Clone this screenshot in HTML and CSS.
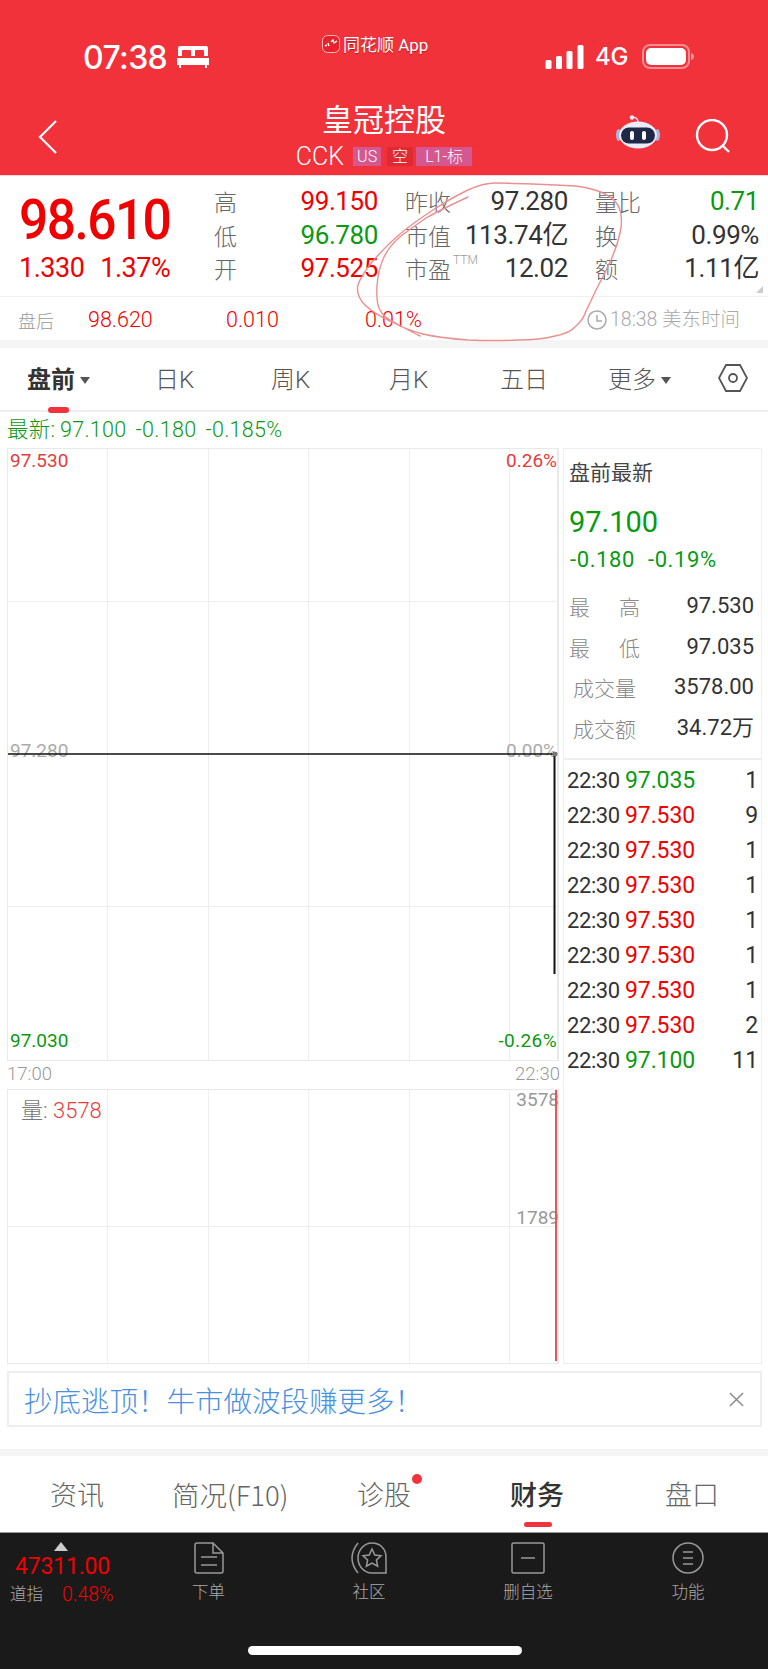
FILE: index.html
```html
<!DOCTYPE html>
<html lang="zh">
<head>
<meta charset="utf-8">
<title>皇冠控股</title>
<link rel="stylesheet" href="styles.css">
</head>
<body>
<div class="page">
  <header class="hdr">
    <div class="status">
      <div class="st-left"><span class="clock">07:38</span>
        <svg class="bed" viewBox="0 0 32 22"><path d="M3 0h26a2 2 0 0 1 2 2v8h-4V5a1 1 0 0 0-1-1h-7a1 1 0 0 0-1 1v5h-4V5a1 1 0 0 0-1-1H6a1 1 0 0 0-1 1v5H1V2a2 2 0 0 1 2-2zM0 12h32v7h-2v3h-2v-3H4v3H2v-3H0z" fill="#fff"/></svg>
      </div>
      <div class="st-mid">
        <svg class="applogo" viewBox="0 0 18 18"><rect x=".5" y=".5" width="17" height="17" rx="5" fill="#e8222c" stroke="#fbb" /><path d="M3 11l2-1M6 8l1 3M9 7l2-2 1 3 3-2" stroke="#fff" stroke-width="1.4" fill="none"/></svg>
        <span>同花顺 App</span>
      </div>
      <div class="st-right">
        <svg class="signal" viewBox="0 0 38 24"><rect x="0" y="15" width="6" height="9" rx="1.5"/><rect x="10.500" y="11" width="6" height="13" rx="1.500"/><rect x="21" y="6" width="6" height="18" rx="1.500"/><rect x="32" y="0" width="6" height="24" rx="1.500"/></svg>
        <span class="fourg">4G</span>
        <svg class="battery" viewBox="0 0 52 25"><rect x="1" y="1" width="46" height="23" rx="7" fill="none" stroke="#fff" stroke-opacity=".45" stroke-width="2"/><rect x="4" y="4" width="40" height="17" rx="5" fill="#fff"/><path d="M49 9c2 .5 3 2 3 3.500s-1 3-3 3.500z" fill="#fff" fill-opacity=".5"/></svg>
      </div>
    </div>
    <div class="nav">
      <svg class="back" viewBox="0 0 20 36"><path d="M18 2L2 18l16 16" fill="none" stroke="#fff" stroke-width="2.200"/></svg>
      <div class="nav-title">
        <div class="name">皇冠控股</div>
        <div class="sub"><span class="code">CCK</span><span class="tag tag-p">US</span><span class="tag tag-d">空</span><span class="tag tag-l">L1-标</span></div>
      </div>
      <div class="nav-icons">
        <svg class="robot" viewBox="0 0 44 34"><circle cx="16" cy="2.500" r="2.200" fill="#e8eef8"/><path d="M16 2.500c4-.5 6 1 6 5" stroke="#e8eef8" stroke-width="1.400" fill="none"/><ellipse cx="2.500" cy="20" rx="2.500" ry="6" fill="#aab4dc"/><ellipse cx="41.500" cy="20" rx="2.500" ry="6" fill="#aab4dc"/><ellipse cx="22" cy="20" rx="19" ry="13.500" fill="#e9ecf9"/><rect x="5" y="12.500" width="34" height="16" rx="8" fill="#1f2947"/><rect x="14" y="16" width="4" height="9" rx="2" fill="#fff"/><rect x="26" y="16" width="4" height="9" rx="2" fill="#fff"/></svg>
        <svg class="search" viewBox="0 0 36 34"><circle cx="17" cy="16" r="15" fill="none" stroke="#fff" stroke-width="2.400"/><path d="M27 26l7 7" stroke="#fff" stroke-width="2.400"/></svg>
      </div>
    </div>
  </header>

  <section class="quote">
    <div class="big">
      <div class="price">98.610</div>
      <div class="change"><span>1.330</span><span>1.37%</span></div>
    </div>
    <div class="stats">
      <span class="lb">高</span><span class="v up">99.150</span>
      <span class="lb lb2">昨收</span><span class="v">97.280</span>
      <span class="lb lb3">量比</span><span class="v dn">0.71</span>
      <span class="lb">低</span><span class="v dn">96.780</span>
      <span class="lb lb2">市值</span><span class="v">113.74亿</span>
      <span class="lb lb3">换</span><span class="v">0.99%</span>
      <span class="lb">开</span><span class="v up">97.525</span>
      <span class="lb lb2">市盈<sup class="ttm">TTM</sup></span><span class="v">12.02</span>
      <span class="lb lb3">额</span><span class="v">1.11亿</span>
    </div>
    <i class="corner"></i>
  </section>

  <section class="after">
    <span class="af-l">盘后</span>
    <span class="af-a">98.620</span>
    <span class="af-b">0.010</span>
    <span class="af-c">0.01%</span>
    <span class="af-t">
      <svg class="clockic" viewBox="0 0 20 20"><circle cx="10" cy="10" r="9" fill="none" stroke="#aaa" stroke-width="1.500"/><path d="M10 5v6h5" fill="none" stroke="#aaa" stroke-width="1.500"/></svg>18:38 美东时间</span>
  </section>

  <nav class="tabs">
    <span class="tab t1 on">盘前<i class="caret"></i><b class="ul"></b></span>
    <span class="tab t2">日K</span>
    <span class="tab t3">周K</span>
    <span class="tab t4">月K</span>
    <span class="tab t5">五日</span>
    <span class="tab t6">更多<i class="caret"></i></span>
    <svg class="hex" viewBox="0 0 30 28"><path d="M8 1h14l7 13-7 13H8L1 14z" fill="none" stroke="#555" stroke-width="1.800"/><circle cx="15" cy="14" r="4" fill="none" stroke="#555" stroke-width="1.800"/></svg>
  </nav>

  <div class="latest">最新: 97.100&nbsp;&nbsp;-0.180&nbsp;&nbsp;-0.185%</div>

  <section class="market">
    <div class="charts">
      <div class="pane pane-price">
        <i class="hl h1"></i><i class="hl h2"></i><i class="hl h3"></i>
        <div class="cols"><i></i><i></i><i></i><i></i><i></i><i></i></div>
        <span class="ax a-tl">97.530</span><span class="ax a-tr">0.26%</span>
        <span class="ax a-ml">97.280</span><span class="ax a-mr">0.00%</span>
        <span class="ax a-bl">97.030</span><span class="ax a-br">-0.26%</span>
        <svg class="pline" viewBox="0 0 552 240"><path d="M0 2H546" stroke="#111" stroke-width="1.300"/><path d="M546.500 2V222" stroke="#111" stroke-width="2"/><circle cx="547" cy="2" r="2.500" fill="#777"/></svg>
      </div>
      <div class="timeaxis"><span>17:00</span><span>22:30</span></div>
      <div class="pane pane-vol">
        <i class="hl hv"></i>
        <div class="cols"><i></i><i></i><i></i><i></i><i></i><i></i></div>
        <span class="vol-l">量: <em>3578</em></span>
        <span class="vol-a">3578</span><span class="vol-b">1789</span>
        <i class="vbar"></i>
      </div>
    </div>
    <aside class="side">
      <div class="sum">
        <div class="s-title">盘前最新</div>
        <div class="s-price">97.100</div>
        <div class="s-chg"><span>-0.180</span><span>-0.19%</span></div>
        <div class="s-row"><span class="sp">最<b></b>高</span><span>97.530</span></div>
        <div class="s-row"><span class="sp">最<b></b>低</span><span>97.035</span></div>
        <div class="s-row"><span class="ind">成交量</span><span>3578.00</span></div>
        <div class="s-row"><span class="ind">成交额</span><span>34.72万</span></div>
      </div>
      <div class="ticks">
        <div class="tk"><span class="tm">22:30</span><span class="dn">97.035</span><span class="n">1</span></div>
        <div class="tk"><span class="tm">22:30</span><span class="up">97.530</span><span class="n">9</span></div>
        <div class="tk"><span class="tm">22:30</span><span class="up">97.530</span><span class="n">1</span></div>
        <div class="tk"><span class="tm">22:30</span><span class="up">97.530</span><span class="n">1</span></div>
        <div class="tk"><span class="tm">22:30</span><span class="up">97.530</span><span class="n">1</span></div>
        <div class="tk"><span class="tm">22:30</span><span class="up">97.530</span><span class="n">1</span></div>
        <div class="tk"><span class="tm">22:30</span><span class="up">97.530</span><span class="n">1</span></div>
        <div class="tk"><span class="tm">22:30</span><span class="up">97.530</span><span class="n">2</span></div>
        <div class="tk"><span class="tm">22:30</span><span class="dn">97.100</span><span class="n">11</span></div>
      </div>
    </aside>
  </section>

  <div class="banner"><span>抄底逃顶！牛市做波段赚更多！</span>
    <svg class="close" viewBox="0 0 16 16"><path d="M1 1l14 14M15 1L1 15" stroke="#888" stroke-width="1.500"/></svg>
  </div>
  <div class="band"></div>

  <nav class="subtabs">
    <span class="st s1">资讯</span>
    <span class="st s2">简况(F10)</span>
    <span class="st s3">诊股<i class="dot"></i></span>
    <span class="st s4 on">财务<b class="ul2"></b></span>
    <span class="st s5">盘口</span>
  </nav>

  <footer class="foot">
    <div class="foot-row">
      <div class="idx">
        <i class="tri"></i>
        <div class="idx-v">47311.00</div>
        <div class="idx-l"><span>道指</span><em>0.48%</em></div>
      </div>
      <div class="fi fi1">
        <svg viewBox="0 0 30 32" class="fic w30"><path d="M3 1h16l10 10v18a2 2 0 0 1-2 2H3a2 2 0 0 1-2-2V3a2 2 0 0 1 2-2zM19 1v10h10M7 15h16M7 23h16" fill="none" stroke="#999" stroke-width="1.500"/></svg>
        <span>下单</span>
      </div>
      <div class="fi fi2">
        <svg viewBox="0 0 36 32" class="fic w36"><path d="M7 1C3 6 1 11 1 16s2 10 6 15" fill="none" stroke="#999" stroke-width="1.500"/><path d="M21 1c8 0 14 6 14 14v16H21c-8 0-14-7-14-15S13 1 21 1z" fill="none" stroke="#999" stroke-width="1.500"/><path d="M21 7l2.800 6 6.200.8-4.600 4.200 1.200 6.200-5.600-3.200-5.600 3.200 1.200-6.200-4.600-4.200 6.200-.8z" fill="none" stroke="#999" stroke-width="1.500"/></svg>
        <span>社区</span>
      </div>
      <div class="fi fi3">
        <svg viewBox="0 0 34 32" class="fic w34"><rect x="1" y="1" width="32" height="30" rx="1.500" fill="none" stroke="#999" stroke-width="1.500"/><path d="M10 16h14" stroke="#999" stroke-width="1.500"/></svg>
        <span>删自选</span>
      </div>
      <div class="fi fi4">
        <svg viewBox="0 0 32 32" class="fic w32"><circle cx="16" cy="16" r="15" fill="none" stroke="#999" stroke-width="1.500"/><path d="M11 10h10M11 16h10M11 22h10" stroke="#999" stroke-width="1.500"/></svg>
        <span>功能</span>
      </div>
    </div>
    <i class="home"></i>
  </footer>

  <svg class="ink" viewBox="0 0 768 1669"><path d="M495 183Q483 183 468 190Q453 197 433 210Q413 223 400 234Q387 245 372 262Q358 280 357.500 288Q357 297 365 305Q373 313 390 321Q407 330 423 334Q440 338 468 340Q497 341 518 340Q540 340 555 336Q570 333 576 326Q583 320 586 311Q590 303 596 290Q603 277 610 262Q617 247 620 233Q623 220 620 210Q617 200 605 194Q593 188 575 186Q557 185 532 184Q507 183 495 183M468 197Q440 210 426 218Q413 227 401 236Q390 245 384 257Q378 270 377 286Q376 303 380 310Q383 317 397 324Q412 332 420 336" fill="none" stroke="#ec8f8f" stroke-width="1.400" stroke-linecap="round"/></svg>
</div>
</body>
</html>
```

FILE: styles.css
```css
* { box-sizing: border-box; }
html, body { margin: 0; padding: 0; background: #fff; }
.page { position: relative; width: 768px; height: 1669px; overflow: hidden; font-family: Roboto, "Noto Sans CJK SC", sans-serif; color: #333; }
em { font-style: normal; }
i { display: block; font-style: normal; }

.up { color: #f00000; }
.dn { color: #0a9a12; }

.hdr { height: 176px; background: #f1323b; color: #fff; border-bottom: 1px solid #f7d9da; }
.status { height: 100px; position: relative; }
.st-left { display: flex; align-items: center; gap: 10px; position: absolute; left: 83px; top: 40px; height: 34px; }
.clock { font-family: Inter, sans-serif; font-size: 32px; font-weight: 500; letter-spacing: -.6px; }
.bed { width: 32px; height: 22px; }
.st-mid { position: absolute; left: 322px; top: 31px; display: flex; align-items: center; gap: 3px; font-size: 17px; text-shadow: 0 1px 1px rgba(120,0,0,.5); }
.applogo { width: 18px; height: 18px; }
.st-right { position: absolute; left: 545px; top: 44px; display: flex; align-items: center; gap: 11px; height: 25px; }
.signal { width: 39px; height: 24px; fill: #fff; }
.fourg { font-family: Inter, sans-serif; font-size: 24px; font-weight: 500; letter-spacing: -.3px; }
.battery { width: 52px; height: 25px; margin-left: 3px; }

.nav { height: 75px; display: flex; align-items: flex-start; position: relative; justify-content: center; }
.back { position: absolute; left: 38px; top: 19px; width: 20px; height: 36px; }
.nav-title { text-align: center; }
.name { font-size: 31px; line-height: 36px; font-family: "Noto Sans CJK SC", sans-serif; }
.sub { display: flex; align-items: center; gap: 6px; height: 27px; margin-top: 7px; }
.code { font-size: 25px; margin-right: 3px; font-weight: 300; }
.tag { font-size: 16px; height: 19px; line-height: 19px; padding: 0 2px; font-weight: 300; }
.tag-p { background: #d4578f; width: 28px; text-align: center; }
.tag-d { background: #e02a33; width: 26px; text-align: center; }
.tag-l { background: #d4578f; width: 56px; text-align: center; margin-left: -3px; }
.nav-icons { position: absolute; left: 616px; top: 15px; display: flex; gap: 35px; align-items: flex-start; }
.robot { width: 44px; height: 34px; }
.search { width: 36px; height: 34px; margin-top: 4px; }

.quote { position: relative; height: 121px; border-bottom: 1px solid #f1f1f1; display: flex; }
.big { width: 214px; padding: 15px 0 0 19px; }
.price { font-size: 56px; line-height: 58px; font-weight: 500; color: #f00000; letter-spacing: -1.700px; transform: scaleX(.92); transform-origin: 0 50%; }
.change { display: flex; gap: 16px; color: #f00000; font-size: 27px; line-height: 30px; margin-top: 4px; letter-spacing: -.5px; }
.stats { flex: 1; display: grid; grid-template-columns: 28px 136px 75px 115px 75px 116px; grid-auto-rows: 33.500px; padding: 9px 0 0; }
.lb { font-size: 23px; line-height: 33px; color: #666; font-family: "Noto Sans CJK SC", sans-serif; font-weight: 300; white-space: nowrap; position: relative; }
.lb2, .lb3 { padding-left: 27px; }
.v { font-size: 26px; line-height: 33px; text-align: right; color: #333; white-space: nowrap; letter-spacing: -.4px; }
.v.up { color: #f00000; }
.v.dn { color: #0a9a12; }
.ttm { position: absolute; left: 75px; top: 1px; font-size: 12px; color: #999; line-height: 14px; font-family: Roboto, sans-serif; }
.corner { position: absolute; right: 5px; bottom: 3px; width: 0; height: 0; border-left: 7px solid transparent; border-bottom: 7px solid #ccc; }

.after { height: 51px; border-bottom: 8px solid #f5f5f5; position: relative; font-size: 21.500px; line-height: 46px; color: #f00000; font-weight: 300; }
.after span { position: absolute; top: 0; white-space: nowrap; }
.after .af-l { left: 18px; color: #999; font-size: 18px; font-family: "Noto Sans CJK SC", sans-serif; }
.af-a { left: 88px; }
.af-b { left: 226px; }
.af-c { left: 365px; }
.after .af-t { left: 587px; color: #aaa; font-size: 19.500px; display: flex; align-items: center; gap: 3px; }
.clockic { width: 20px; height: 20px; }

.tabs { height: 64px; border-bottom: 2px solid #eeeeee; position: relative; font-size: 24px; color: #555; font-weight: 300; }
.tab { position: absolute; top: 0; line-height: 65px; white-space: nowrap; display: flex; align-items: center; gap: 5px; }
.tab.on { color: #333; font-weight: 700; }
.t1 { left: 27px; } .t2 { left: 155px; } .t3 { left: 271px; } .t4 { left: 389px; } .t5 { left: 500px; } .t6 { left: 608px; }
.caret { width: 0; height: 0; border: 5.500px solid transparent; border-top: 7px solid #555; border-bottom: 0; }
.ul { position: absolute; left: 21px; bottom: 0; width: 21px; height: 6px; background: #f2333d; border-radius: 3px; }
.hex { position: absolute; left: 718px; top: 16px; width: 30px; height: 28px; }

.latest { height: 36px; padding-left: 7px; line-height: 36px; font-size: 21.500px; color: #0a9a12; font-weight: 300; white-space: nowrap; letter-spacing: .3px; word-spacing: -1px; }

.market { display: flex; height: 916px; position: relative; padding: 0 6px 0 7px; gap: 4px; }
.charts { width: 552px; }
.pane { position: relative; border: 1px solid #e9e9e9; border-right-width: 2px; }
.pane-price { height: 613px; }
.pane-vol { height: 275px; }
.timeaxis { height: 28px; display: flex; justify-content: space-between; font-size: 18.500px; line-height: 27px; color: #999; margin-right: -1px; font-weight: 300; }
.hl { position: absolute; left: 0; right: 0; height: 1px; background: #eeeeee; }
.h1 { top: 152px; } .h2 { top: 304px; } .h3 { top: 457px; } .hv { top: 136px; }
.cols { position: absolute; inset: 0; display: grid; grid-template-columns: 100px 101px 100px 101px 100px 1fr; }
.cols i { border-right: 1px solid #eeeeee; }
.cols i:last-child { border-right: 0; }
.ax { position: absolute; font-size: 19px; line-height: 20px; white-space: nowrap; }
.a-tl { left: 2px; top: 2px; color: #e33c3c; }
.a-tr { right: 0; top: 2px; color: #e33c3c; }
.a-ml { left: 2px; top: 292px; color: #aaa; }
.a-mr { right: 0; top: 292px; color: #aaa; }
.a-bl { left: 2px; top: 582px; color: #0a9a12; }
.a-br { right: 0; top: 582px; color: #0a9a12; letter-spacing: .4px; }
.pline { position: absolute; left: 0; top: 303px; width: 552px; height: 240px; }
.vol-l { position: absolute; left: 13px; top: 9px; font-size: 22px; line-height: 24px; color: #777; font-weight: 300; }
.vol-l em { color: #e33c3c; }
.vol-a, .vol-b { position: absolute; right: -2px; font-size: 19px; line-height: 20px; color: #999; }
.vol-a { top: 0; } .vol-b { top: 118px; }
.vbar { position: absolute; right: 0; top: 0; bottom: 2px; width: 2px; background: #e05a5a; }

.side { width: 199px; border: 1px solid #eeeeee; height: 916px; }
.sum { height: 311px; border-bottom: 2px solid #eeeeee; padding: 0 7px 0 5px; }
.s-title { font-size: 21px; line-height: 26px; padding-top: 9px; color: #444; font-family: "Noto Sans CJK SC", sans-serif; box-sizing: content-box; height: 26px; }
.s-price { font-size: 29px; line-height: 34px; color: #0a9a12; margin-top: 21px; }
.s-chg { display: flex; gap: 13px; font-size: 22px; line-height: 26px; margin-top: 8px; margin-left: 1px; color: #0a9a12; letter-spacing: .6px; }
.s-row { display: flex; justify-content: space-between; font-size: 22px; line-height: 40.500px; color: #333; }
.s-chg + .s-row { margin-top: 13px; }
.s-row span:first-child { color: #888; font-weight: 300; font-family: "Noto Sans CJK SC", sans-serif; font-size: 21px; display: flex; }
.sp b { width: 29px; }
.ind { padding-left: 4px; }
.ticks { padding: 3px 3px 0 3px; }
.tk { display: grid; grid-template-columns: 58px 1fr auto; font-size: 23px; line-height: 35px; color: #333; letter-spacing: -.1px; }
.tm { font-size: 22px; letter-spacing: -.4px; }

.banner { margin: 7px 6px 0 7px; height: 56px; border: 2px solid #eeeeee; display: flex; align-items: center; padding-left: 15px; font-size: 28.500px; color: #4a90e2; position: relative; font-family: "Noto Sans CJK SC", sans-serif; font-weight: 300; }
.close { position: absolute; right: 16px; top: 19px; width: 15px; height: 15px; }
.band { height: 7px; margin-top: 22px; background: #f5f5f5; }

.subtabs { height: 76px; position: relative; font-size: 27px; color: #666; font-family: "Noto Sans CJK SC", sans-serif; font-weight: 300; }
.st { position: absolute; top: 0; line-height: 76px; white-space: nowrap; }
.st.on { color: #333; font-weight: 500; }
.s1 { left: 50px; } .s2 { left: 172px; font-size: 27.500px; } .s3 { left: 357px; } .s4 { left: 510px; } .s5 { left: 665px; }
.dot { position: absolute; right: -11px; top: 18px; width: 10px; height: 10px; border-radius: 50%; background: #f2333d; }
.ul2 { position: absolute; left: 14px; bottom: 5px; width: 28px; height: 5px; border-radius: 3px; background: #f2333d; }

.foot { height: 139px; background: #1a1a1a; border-top: 1px solid #999; border-bottom: 1px solid #888; position: relative; }
.foot-row { height: 100%; position: relative; }
.idx { position: absolute; left: 0; top: 0; width: 125px; }
.tri { width: 0; height: 0; border: 7.500px solid transparent; border-bottom: 9px solid #ccc; border-top: 0; margin: 9px 0 0 54px; }
.idx-v { color: #f00000; font-size: 23px; line-height: 26px; margin: 3px 0 0 15px; letter-spacing: -.2px; }
.idx-l { display: flex; gap: 19px; margin: 3px 0 0 10px; font-size: 16.500px; line-height: 24px; color: #aaa; font-weight: 300; }
.idx-l em { color: #f00000; font-size: 19.500px; }
.fi { position: absolute; top: 9px; display: flex; flex-direction: column; align-items: center; font-size: 16.500px; color: #aaa; font-family: "Noto Sans CJK SC", sans-serif; font-weight: 300; gap: 4px; line-height: 26px; }
.fic { height: 32px; }
.w30 { width: 30px; } .w36 { width: 36px; } .w34 { width: 34px; } .w32 { width: 32px; }
.fi1 { left: 192px; width: 33px; } .fi2 { left: 350px; width: 38px; } .fi3 { left: 502px; width: 52px; } .fi4 { left: 671px; width: 34px; }
.home { position: absolute; left: 248px; top: 113px; width: 274px; height: 9px; border-radius: 5px; background: #fff; }

.ink { position: absolute; left: 0; top: 0; width: 768px; height: 1669px; pointer-events: none; }
```
